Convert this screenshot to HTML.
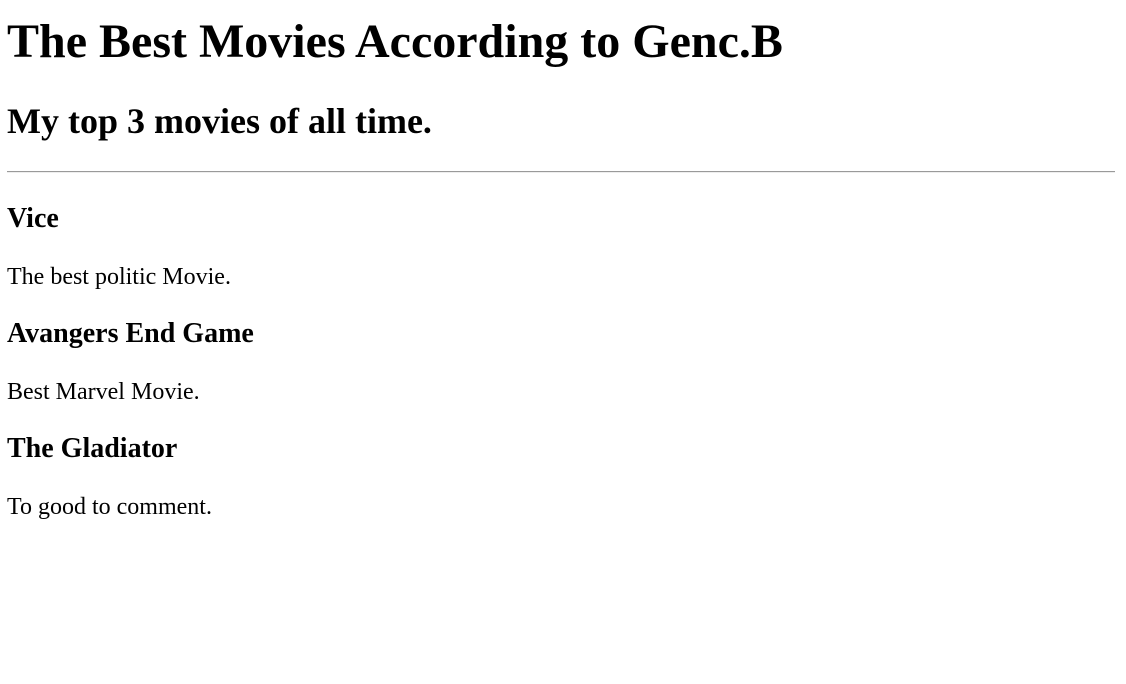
<!DOCTYPE html>
<html><head><meta charset="utf-8"><style>
html,body{margin:0;background:#fff;width:1126px;height:684px;overflow:hidden}
body{font-family:"Liberation Serif",serif;color:#000;position:relative}
.t{position:absolute;left:7px;line-height:1;white-space:nowrap;margin:0}
h1.t{font-size:48px;font-weight:bold;top:18px}
h2.t{font-size:36px;font-weight:bold;top:103px}
h3.t{font-size:28px;font-weight:bold}
p.t{font-size:24px}
.hr{position:absolute;left:7px;top:171px;width:1108px;height:0;border-top:1px solid #9a9a9a;border-bottom:1px solid #eee}
</style></head><body>
<h1 class="t">The Best Movies According to Genc.B</h1>
<h2 class="t">My top 3 movies of all time.</h2>
<div class="hr"></div>
<h3 class="t" style="top:205px">Vice</h3>
<p class="t" style="top:265px">The best politic Movie.</p>
<h3 class="t" style="top:320px">Avangers End Game</h3>
<p class="t" style="top:380px">Best Marvel Movie.</p>
<h3 class="t" style="top:435px">The Gladiator</h3>
<p class="t" style="top:495px">To good to comment.</p>
</body></html>
